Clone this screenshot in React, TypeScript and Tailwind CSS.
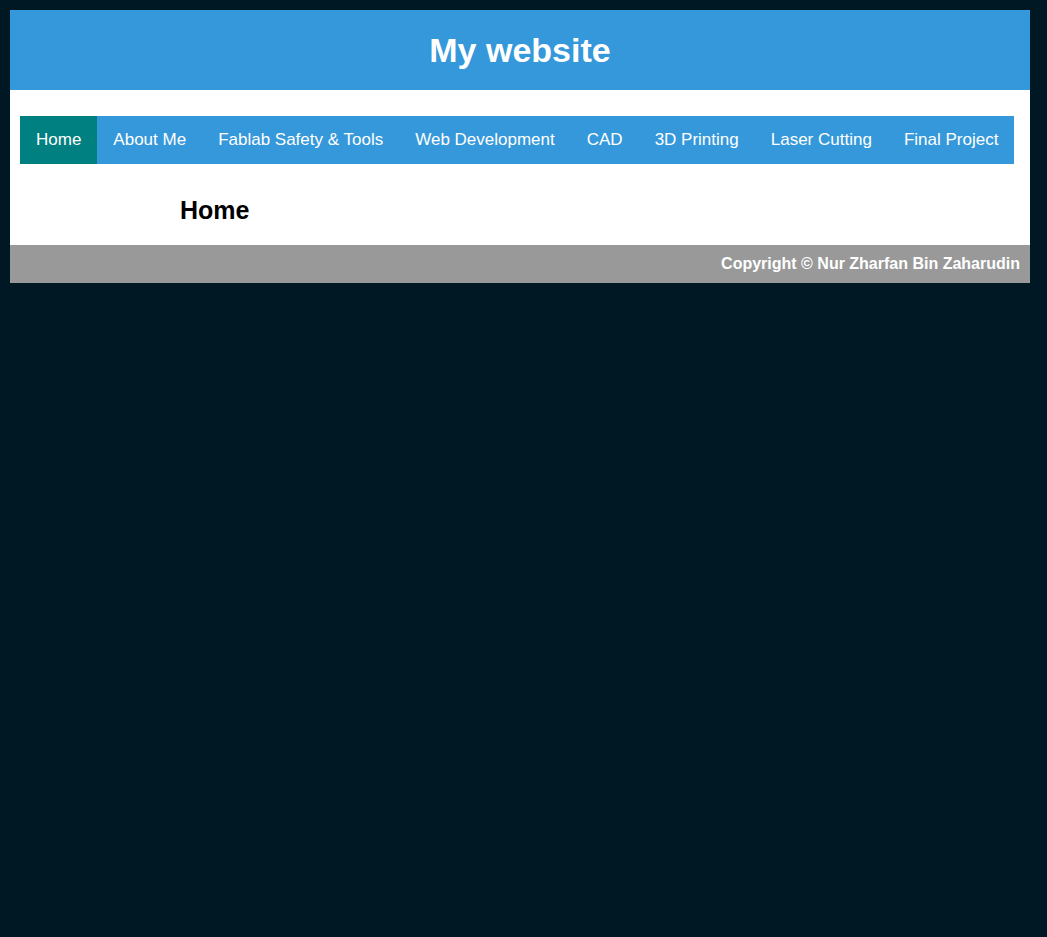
const links = [
  "Home",
  "About Me",
  "Fablab Safety & Tools",
  "Web Development",
  "CAD",
  "3D Printing",
  "Laser Cutting",
  "Final Project",
];

export default function App() {
  return (
    <div className="min-h-[937px] bg-[#001724] p-[10px] font-['Liberation_Sans',Arial,sans-serif]">
      <div className="w-[1020px] bg-white">
        <header className="h-[80px] bg-[#3498db] flex items-center justify-center">
          <h1 className="text-[34px] font-bold text-white">My website</h1>
        </header>

        <div className="px-[10px] pt-[26px]">
          <nav className="inline-flex bg-[#3498db]">
            {links.map((link, i) => (
              <a
                key={link}
                href="#"
                className={
                  "px-[16px] py-[14px] text-[17px] leading-[20px] text-white " +
                  (i === 0 ? "bg-[#008080]" : "")
                }
              >
                {link}
              </a>
            ))}
          </nav>
        </div>

        <div className="pl-[170px] pt-[32px] pb-[21px]">
          <h2 className="text-[25px] leading-[28px] font-bold text-black">Home</h2>
        </div>

        <footer className="h-[38px] bg-[#999999] flex items-center justify-end pr-[10px]">
          <p className="text-[16px] font-bold text-white">
            Copyright © Nur Zharfan Bin Zaharudin
          </p>
        </footer>
      </div>
    </div>
  );
}
